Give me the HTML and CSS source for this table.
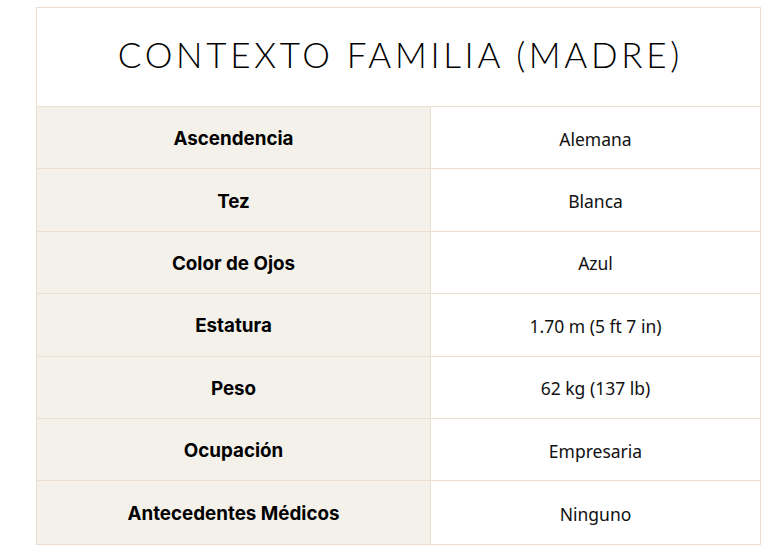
FILE: index.html
```html
<!DOCTYPE html>
<html lang="es">
<head>
<meta charset="utf-8">
<link rel="stylesheet" href="styles.css">
</head>
<body>
<div class="sheet">
  <div class="title">CONTEXTO FAMILIA (MADRE)</div>
  <div class="row"><div class="label">Ascendencia</div><div class="value">Alemana</div></div>
  <div class="row"><div class="label">Tez</div><div class="value">Blanca</div></div>
  <div class="row"><div class="label">Color de Ojos</div><div class="value">Azul</div></div>
  <div class="row"><div class="label">Estatura</div><div class="value">1.70 m (5 ft 7 in)</div></div>
  <div class="row"><div class="label">Peso</div><div class="value">62 kg (137 lb)</div></div>
  <div class="row"><div class="label">Ocupación</div><div class="value">Empresaria</div></div>
  <div class="row"><div class="label">Antecedentes Médicos</div><div class="value">Ninguno</div></div>
</div>
</body>
</html>
```
FILE: styles.css
```css
html, body { margin: 0; padding: 0; background: #ffffff; }
body { padding: 7px 15px 0 36px; }
.sheet {
  width: 725px;
  border: 1px solid #ecdfcf;
  box-sizing: border-box;
}
.title {
  height: 99px;
  padding-bottom: 6px;
  box-sizing: border-box;
  display: flex;
  align-items: center;
  justify-content: center;
  font-family: Lato, "Liberation Sans", sans-serif;
  font-weight: 300;
  font-size: 35px;
  letter-spacing: 3.7px;
  text-indent: 3.7px;
  color: #000;
  border-bottom: 1px solid #ecdfcf;
}
.row {
  display: grid;
  grid-template-columns: 394px 1fr;
  height: 62.4px;
  border-bottom: 1px solid #ecdfcf;
  box-sizing: border-box;
}
.row:last-child { border-bottom: none; }
.label {
  background: #f4f1eb;
  border-right: 1px solid #ecdfcf;
  display: flex;
  align-items: center;
  justify-content: center;
  padding-top: 2px;
  font-family: Inter, "Liberation Sans", sans-serif;
  font-weight: 700;
  font-size: 18.8px;
  color: #000;
}
.value {
  display: flex;
  align-items: center;
  justify-content: center;
  padding-top: 2px;
  font-family: "Noto Sans", sans-serif;
  font-size: 17.5px;
  color: #111;
}
```
